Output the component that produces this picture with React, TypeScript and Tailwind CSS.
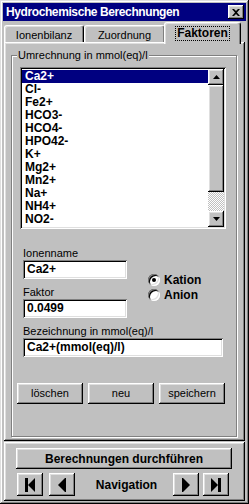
import React from "react";

// Win98 bevels
const raised =
  "shadow-[inset_-1px_-1px_0_#000,inset_1px_1px_0_#fff,inset_-2px_-2px_0_#808080,inset_2px_2px_0_#dfdfdf]";
const sunken =
  "shadow-[inset_1px_1px_0_#808080,inset_-1px_-1px_0_#fff,inset_2px_2px_0_#000,inset_-2px_-2px_0_#dfdfdf]";

const ions = ["Ca2+", "Cl-", "Fe2+", "HCO3-", "HCO4-", "HPO42-", "K+", "Mg2+", "Mn2+", "Na+", "NH4+", "NO2-"];

const Field = ({ label, value, width }: { label: string; value: string; width: string }) => (
  <div className="flex flex-col">
    <div className="h-[13px] leading-[13px] text-[11px]">{label}</div>
    <div className={`${width} h-[19px] bg-white ${sunken} pl-[4px] text-[12px] font-bold leading-[19px]`}>{value}</div>
  </div>
);

const Radio = ({ label, checked }: { label: string; checked?: boolean }) => (
  <div className="h-[15px] flex items-center gap-[4px]">
    <div className="w-[12px] h-[12px] rounded-full bg-white flex items-center justify-center shadow-[inset_1px_1px_0_#808080,inset_-1px_-1px_0_#fff,inset_2px_2px_0_#000,inset_-2px_-2px_0_#dfdfdf]">
      {checked && <div className="w-[4px] h-[4px] rounded-full bg-black" />}
    </div>
    <span className="text-[12px] font-bold">{label}</span>
  </div>
);

const NavIcon = ({ kind }: { kind: "first" | "prev" | "next" | "last" }) => (
  <svg width="12" height="14" viewBox="0 0 12 14">
    {kind === "first" && (
      <>
        <rect x="1" y="0" width="3" height="14" fill="#000" />
        <polygon points="4,7 11,0 11,14" fill="#000" />
      </>
    )}
    {kind === "prev" && <polygon points="2,7 10,-1 10,15" fill="#000" />}
    {kind === "next" && <polygon points="10,7 2,-1 2,15" fill="#000" />}
    {kind === "last" && (
      <>
        <polygon points="8,7 1,0 1,14" fill="#000" />
        <rect x="8" y="0" width="3" height="14" fill="#000" />
      </>
    )}
  </svg>
);

const Btn = ({ children, className = "" }: { children: React.ReactNode; className?: string }) => (
  <div className={`${raised} bg-[#c0c0c0] flex items-center justify-center ${className}`}>{children}</div>
);

export default function App() {
  return (
    <div className="w-[249px] h-[504px] bg-[#c0c0c0] p-[3px] flex flex-col font-['Liberation_Sans',Arial,sans-serif] text-black shadow-[inset_-1px_-1px_0_#000,inset_1px_1px_0_#dfdfdf,inset_-2px_-2px_0_#808080,inset_2px_2px_0_#fff]">
      {/* Title bar */}
      <div className="h-[18px] bg-[#000080] flex items-center justify-between pl-[3px] pr-[2px]">
        <span className="text-white font-bold text-[12px] tracking-[-0.4px]">Hydrochemische Berechnungen</span>
        <Btn className="w-[16px] h-[14px]">
          <svg width="8" height="7" viewBox="0 0 8 7">
            <path d="M0 0h2l2 2 2-2h2L5 3.5 8 7H6L4 5 2 7H0l3-3.5z" fill="#000" />
          </svg>
        </Btn>
      </div>

      {/* Tabs */}
      <div className="h-[21px] flex items-end pl-[1px]">
        <div className="w-[80px] h-[17px] rounded-t-[3px] border-t border-l border-white border-r border-r-black shadow-[inset_-1px_0_0_#808080,inset_1px_1px_0_#dfdfdf] text-[11px] text-center pt-[1px]">
          Ionenbilanz
        </div>
        <div className="w-[81px] h-[17px] rounded-t-[3px] border-t border-l border-white border-r border-r-black shadow-[inset_-1px_0_0_#808080,inset_1px_1px_0_#dfdfdf] text-[11px] text-center pt-[1px]">
          Zuordnung
        </div>
        <div className="relative z-10 -ml-[1px] -mb-[2px] w-[77px] h-[22px] bg-[#c0c0c0] rounded-t-[3px] border-t border-l border-white border-r border-r-black shadow-[inset_-1px_0_0_#808080,inset_1px_1px_0_#dfdfdf] flex justify-center pt-[3px]">
          <span className="h-[15px] leading-[13px] border border-dotted border-black px-[1px] text-[12px] font-bold">Faktoren</span>
        </div>
      </div>

      {/* Tab panel */}
      <div className={`flex-1 mx-[1px] ${raised} pt-[13px] pl-[7px] pr-[8px] pb-[4px] flex flex-col`}>
        <div className="flex-1 relative border border-[#808080] shadow-[inset_1px_1px_0_#fff,1px_1px_0_#fff] pt-[11px] flex flex-col">
          <span className="absolute -top-[8px] left-[5px] bg-[#c0c0c0] px-[1px] text-[11px] leading-[14px]">
            Umrechnung in mmol(eq)/l
          </span>

          {/* List box */}
          <div className={`ml-[8px] w-[206px] h-[162px] bg-white ${sunken} p-[2px] flex`}>
            <div className="flex-1 overflow-hidden pt-[1px]">
              {ions.map((ion, i) => (
                <div
                  key={ion}
                  className={`h-[13px] leading-[13px] pl-[3px] text-[12px] font-bold ${i === 0 ? "bg-[#000080] text-white" : ""}`}
                >
                  {ion}
                </div>
              ))}
            </div>
            <div className="w-[16px] flex flex-col">
              <Btn className="h-[16px]">
                <svg width="7" height="4" viewBox="0 0 7 4">
                  <polygon points="3.5,0 7,4 0,4" fill="#000" />
                </svg>
              </Btn>
              <Btn className="h-[107px]">{null}</Btn>
              <div className="flex-1 bg-[repeating-conic-gradient(#c0c0c0_0%_25%,#fff_0%_50%)] bg-size-[2px_2px]" />
              <Btn className="h-[16px]">
                <svg width="7" height="4" viewBox="0 0 7 4">
                  <polygon points="0,0 7,0 3.5,4" fill="#000" />
                </svg>
              </Btn>
            </div>
          </div>

          {/* Fields */}
          <div className="mt-[18px] ml-[11px] flex">
            <div className="flex flex-col gap-[7px]">
              <Field label="Ionenname" value="Ca2+" width="w-[104px]" />
              <Field label="Faktor" value="0.0499" width="w-[104px]" />
            </div>
            <div className="ml-[21px] pt-[25px] flex flex-col">
              <Radio label="Kation" checked />
              <Radio label="Anion" />
            </div>
          </div>
          <div className="mt-[7px] ml-[11px]">
            <Field label="Bezeichnung in mmol(eq)/l" value="Ca2+(mmol(eq)/l)" width="w-[200px]" />
          </div>

          {/* Buttons */}
          <div className="mt-[26px] ml-[5px] flex gap-[5px]">
            <Btn className="w-[66px] h-[21px] text-[11px]">löschen</Btn>
            <Btn className="w-[66px] h-[21px] text-[11px]">neu</Btn>
            <Btn className="w-[66px] h-[21px] text-[11px]">speichern</Btn>
          </div>
        </div>
      </div>

      {/* Bottom frame */}
      <div className={`h-[59px] mt-[1px] mx-[1px] ${raised} pt-[6px] pl-[12px] pr-[13px] flex flex-col`}>
        <Btn className="h-[21px] text-[12px] font-bold">Berechnungen durchführen</Btn>
        <div className="mt-[4px] flex items-center pl-[1px] pr-[3px]">
          <Btn className="w-[26px] h-[23px]">
            <NavIcon kind="first" />
          </Btn>
          <Btn className="ml-[6px] w-[26px] h-[23px]">
            <NavIcon kind="prev" />
          </Btn>
          <div className="flex-1 text-center text-[12px] font-bold pl-[5px]">Navigation</div>
          <Btn className="w-[26px] h-[23px]">
            <NavIcon kind="next" />
          </Btn>
          <Btn className="ml-[4px] w-[26px] h-[23px]">
            <NavIcon kind="last" />
          </Btn>
        </div>
      </div>
    </div>
  );
}
